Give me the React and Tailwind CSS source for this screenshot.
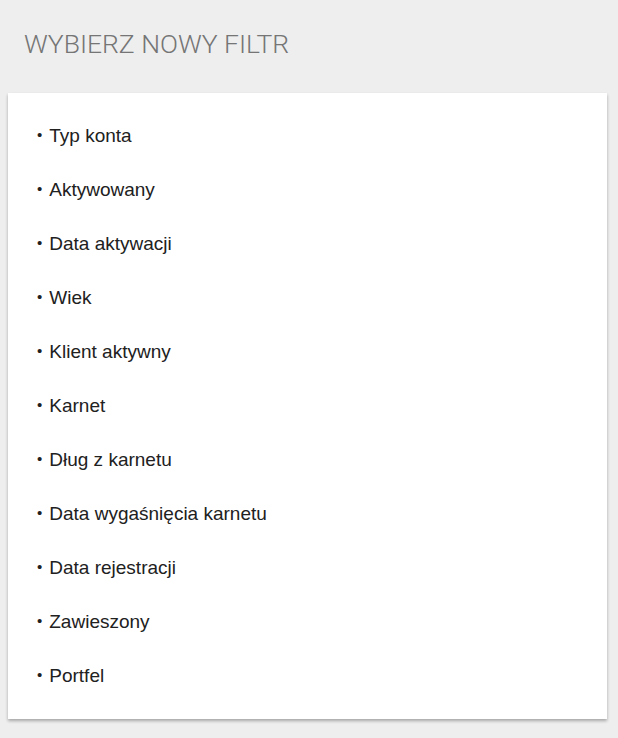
import React from "react";

const filters = [
  "Typ konta",
  "Aktywowany",
  "Data aktywacji",
  "Wiek",
  "Klient aktywny",
  "Karnet",
  "Dług z karnetu",
  "Data wygaśnięcia karnetu",
  "Data rejestracji",
  "Zawieszony",
  "Portfel",
];

const App = () => {
  return (
    <div className="w-[618px] h-[738px] bg-[#eeeeee] px-2 pt-[26px]">
      {/* naglowek */}
      <div className="h-[67px] pl-[16px] text-[26.5px] leading-[36px] font-light text-[#757575] font-['Roboto']">
        WYBIERZ NOWY FILTR
      </div>
      <div className="w-[599px] bg-white py-4 shadow-[0_2px_3px_rgba(0,0,0,0.3)]">
        {filters.map((f) => (
          <div
            key={f}
            className="h-[54px] flex items-center pl-[29px] text-[19px] text-[#212121] cursor-pointer font-['Liberation_Sans']"
          >
            <span>
              <span className="text-[15px] mr-[7px] align-[2px]">•</span>
              {f}
            </span>
          </div>
        ))}
      </div>
    </div>
  );
};

export default App;
